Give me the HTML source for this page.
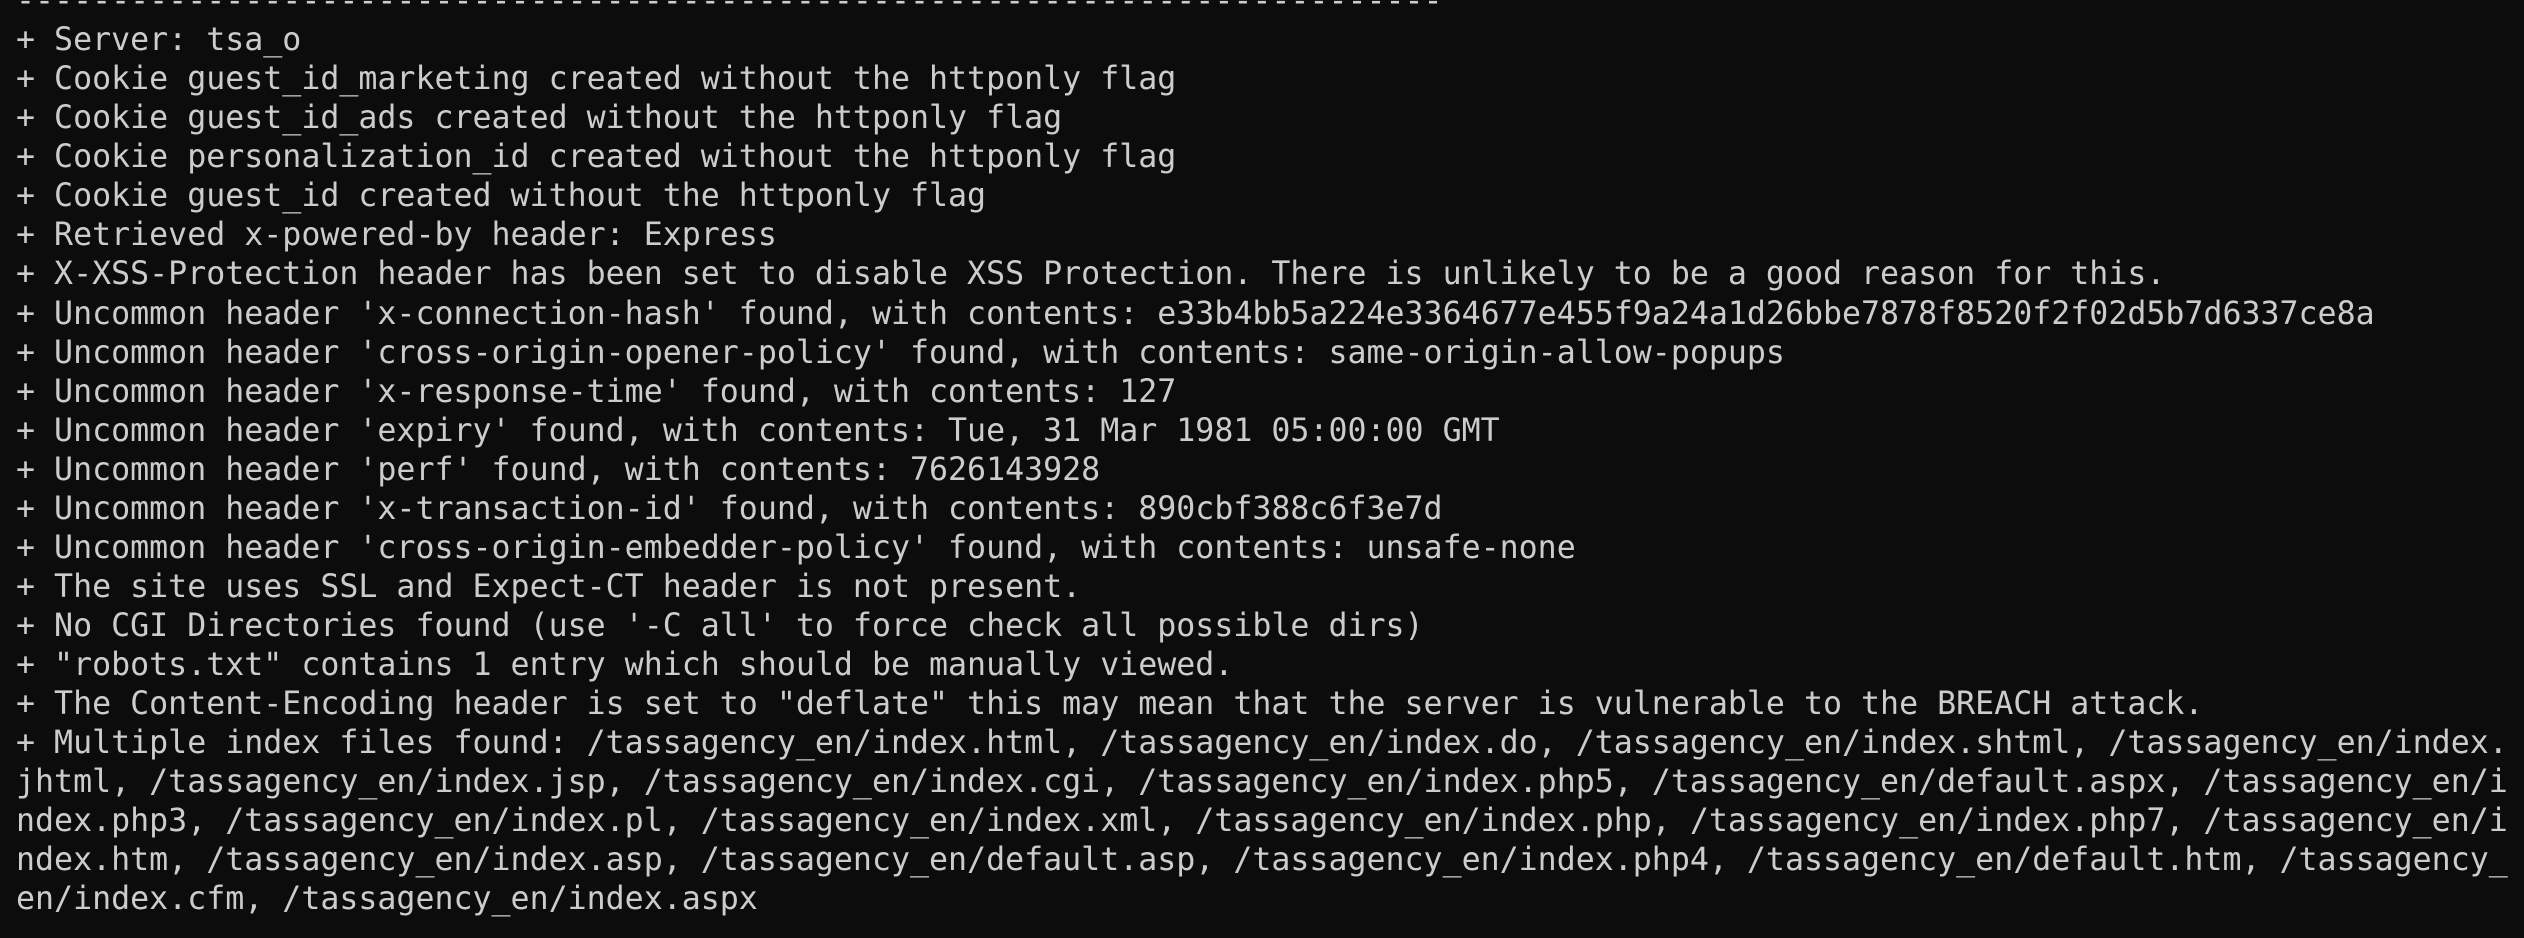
<!DOCTYPE html>
<html><head><meta charset="utf-8"><style>
html,body{margin:0;padding:0;background:#0c0c0c;width:2524px;height:938px;overflow:hidden}
pre{position:absolute;left:16px;top:-18px;margin:0;font-family:"DejaVu Sans Mono","Liberation Mono",monospace;font-size:31.6px;line-height:39.07px;color:#cccccc;white-space:pre}
</style></head><body><pre>---------------------------------------------------------------------------
+ Server: tsa_o
+ Cookie guest_id_marketing created without the httponly flag
+ Cookie guest_id_ads created without the httponly flag
+ Cookie personalization_id created without the httponly flag
+ Cookie guest_id created without the httponly flag
+ Retrieved x-powered-by header: Express
+ X-XSS-Protection header has been set to disable XSS Protection. There is unlikely to be a good reason for this.
+ Uncommon header 'x-connection-hash' found, with contents: e33b4bb5a224e3364677e455f9a24a1d26bbe7878f8520f2f02d5b7d6337ce8a
+ Uncommon header 'cross-origin-opener-policy' found, with contents: same-origin-allow-popups
+ Uncommon header 'x-response-time' found, with contents: 127
+ Uncommon header 'expiry' found, with contents: Tue, 31 Mar 1981 05:00:00 GMT
+ Uncommon header 'perf' found, with contents: 7626143928
+ Uncommon header 'x-transaction-id' found, with contents: 890cbf388c6f3e7d
+ Uncommon header 'cross-origin-embedder-policy' found, with contents: unsafe-none
+ The site uses SSL and Expect-CT header is not present.
+ No CGI Directories found (use '-C all' to force check all possible dirs)
+ "robots.txt" contains 1 entry which should be manually viewed.
+ The Content-Encoding header is set to "deflate" this may mean that the server is vulnerable to the BREACH attack.
+ Multiple index files found: /tassagency_en/index.html, /tassagency_en/index.do, /tassagency_en/index.shtml, /tassagency_en/index.
jhtml, /tassagency_en/index.jsp, /tassagency_en/index.cgi, /tassagency_en/index.php5, /tassagency_en/default.aspx, /tassagency_en/i
ndex.php3, /tassagency_en/index.pl, /tassagency_en/index.xml, /tassagency_en/index.php, /tassagency_en/index.php7, /tassagency_en/i
ndex.htm, /tassagency_en/index.asp, /tassagency_en/default.asp, /tassagency_en/index.php4, /tassagency_en/default.htm, /tassagency_
en/index.cfm, /tassagency_en/index.aspx</pre></body></html>
